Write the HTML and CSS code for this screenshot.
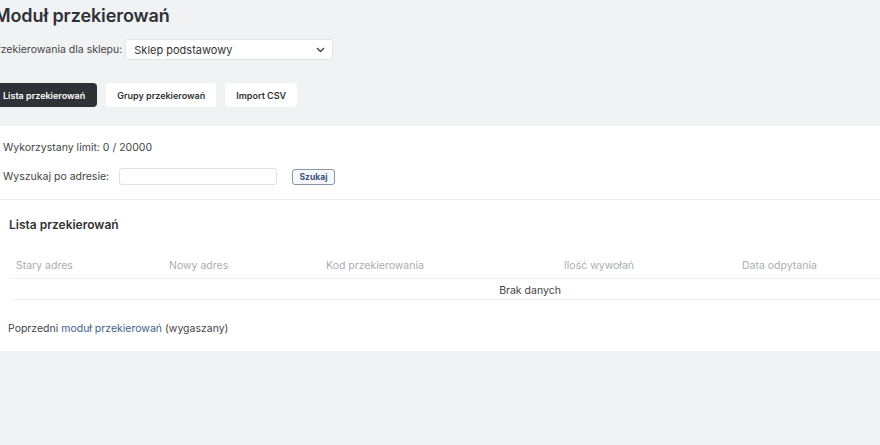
FILE: index.html
```html
<!DOCTYPE html>
<html lang="pl">
<head>
<meta charset="utf-8">
<title>Moduł przekierowań</title>
<link rel="stylesheet" href="styles.css">
</head>
<body>
<div class="page">
  <header class="head">
    <h1 class="title">Moduł przekierowań</h1>
    <div class="shop-row">
      <label class="shop-label">Przekierowania dla sklepu:</label>
      <div class="select">
        <span>Sklep podstawowy</span>
        <svg class="chev" width="9" height="6" viewBox="0 0 9 6"><path d="M1 1l3.5 3.5L8 1" fill="none" stroke="#444" stroke-width="1.4"/></svg>
      </div>
    </div>
    <nav class="tabs">
      <a class="tab active">Lista przekierowań</a>
      <a class="tab">Grupy przekierowań</a>
      <a class="tab">Import CSV</a>
    </nav>
  </header>
  <section class="panel">
    <div class="panel-top">
      <p class="limit">Wykorzystany limit: 0 / 20000</p>
      <div class="search">
        <span class="search-label">Wyszukaj po adresie:</span>
        <span class="input"></span>
        <button class="btn">Szukaj</button>
      </div>
    </div>
    <div class="list">
      <h2 class="list-title">Lista przekierowań</h2>
      <table class="tbl">
        <thead>
          <tr>
            <th class="c1">Stary adres</th>
            <th class="c2">Nowy adres</th>
            <th class="c3">Kod przekierowania</th>
            <th class="c4">Ilość wywołań</th>
            <th class="c5">Data odpytania</th>
          </tr>
        </thead>
        <tbody>
          <tr><td colspan="5" class="empty">Brak danych</td></tr>
        </tbody>
      </table>
      <p class="prev">Poprzedni <a class="link">moduł przekierowań</a> (wygaszany)</p>
    </div>
  </section>
</div>
</body>
</html>
```
FILE: styles.css
```css
html, body {
  margin: 0;
  padding: 0;
  background: #f1f2f4;
  overflow: hidden;
}
body {
  font-family: Inter, "Noto Sans", sans-serif;
  color: #333;
  width: 880px;
  height: 445px;
}
.page {
  margin-left: -12px;
  width: 1080px;
}
.head {
  padding: 3px 0 0 10px;
}
.title {
  margin: 0 0 0 -4px;
  font-size: 18px;
  font-weight: 600;
  color: #2f3136;
  line-height: 26px;
  letter-spacing: -0.1px;
}
.shop-row {
  display: flex;
  align-items: center;
  gap: 3px;
  margin: 10px 0 0 -8px;
}
.shop-label {
  font-size: 10.5px;
  color: #444;
}
.select {
  width: 208px;
  height: 21px;
  box-sizing: border-box;
  background: #fff;
  border: 1px solid #e1e3e6;
  border-radius: 3px;
  display: flex;
  align-items: center;
  justify-content: space-between;
  padding: 0 7px 0 8px;
  font-size: 11px;
  color: #333;
}
.chev { display: block; }
.tabs {
  display: flex;
  gap: 9px;
  margin: 23px 0 0 -6px;
}
.tab {
  height: 24px;
  box-sizing: border-box;
  display: flex;
  align-items: center;
  padding: 0 11px;
  font-size: 9px;
  font-weight: 600;
  color: #333;
  background: #fff;
  border-radius: 4px;
}
.tab.active {
  background: #2e3135;
  color: #fff;
  padding: 0 12px 0 11px;
}
.panel {
  margin-top: 19px;
  background: #fff;
  height: 225px;
}
.panel-top {
  padding: 14px 0 0 15px;
  border-bottom: 1px solid #ebedef;
  height: 59px;
}
.limit {
  margin: 0;
  font-size: 10.5px;
  color: #444;
  line-height: 16px;
}
.search {
  display: flex;
  align-items: center;
  margin-top: 12px;
  font-size: 10.5px;
  color: #444;
}
.search-label { width: 116px; }
.input {
  width: 158px;
  height: 17px;
  box-sizing: border-box;
  border: 1px solid #dfe1e4;
  border-radius: 3px;
  background: #fff;
}
.btn {
  margin-left: 15px;
  height: 16px;
  width: 43px;
  padding: 0;
  box-sizing: border-box;
  border: 1px solid #8a96a8;
  border-radius: 3px;
  background: #f7f8fa;
  font-family: Inter, sans-serif;
  font-size: 8.5px;
  font-weight: 700;
  color: #3b5580;
}
.list {
  padding: 0 0 0 22px;
}
.list-title {
  margin: 16px 0 0 -1px;
  font-size: 12px;
  font-weight: 600;
  color: #333;
  line-height: 18px;
}
.tbl {
  margin-top: 25px;
  width: 1040px;
  border-collapse: collapse;
  font-size: 10.5px;
}
.tbl th {
  text-align: left;
  font-weight: 400;
  color: #aaadb2;
  padding: 0 0 5px 6px;
  border-bottom: 1px solid #eef0f2;
  line-height: 14px;
}
.c1 { width: 147px; }
.c2 { width: 151px; }
.c3 { width: 232px; }
.c4 { width: 172px; }
.tbl td.empty {
  text-align: center;
  color: #444;
  padding: 5px 0 1px;
  border-bottom: 1px solid #eef0f2;
  line-height: 14px;
}
.prev {
  margin: 22px 0 0 -2px;
  font-size: 10.5px;
  color: #444;
}
.link {
  color: #3d5f8c;
}
```
